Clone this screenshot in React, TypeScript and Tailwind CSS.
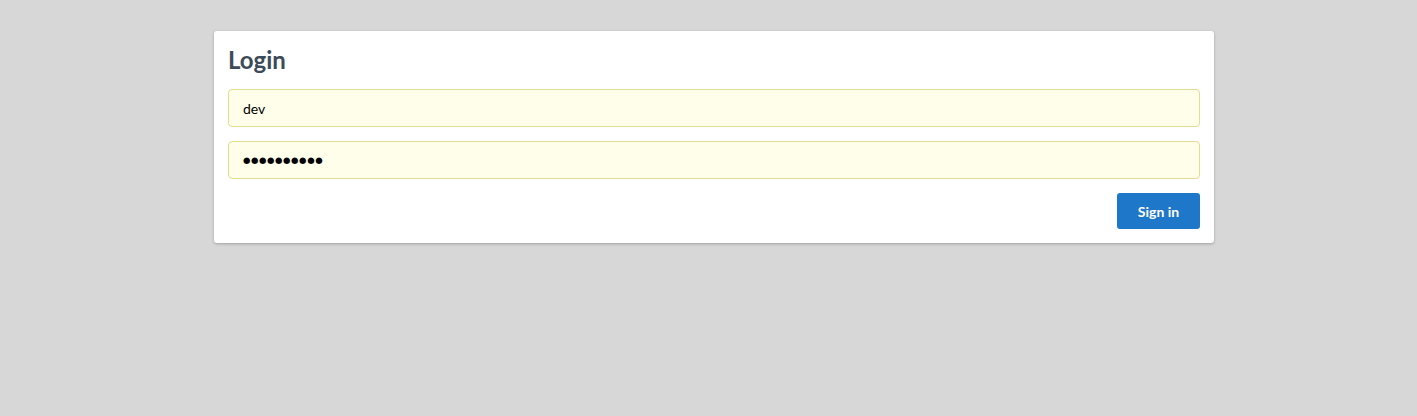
import React from "react";

export default function App() {
  return (
    <div className="min-h-[416px] w-full bg-[#d7d7d7] pt-[31px]" style={{ fontFamily: "Lato, 'Open Sans', sans-serif" }}>
      <div className="ml-[214px] w-[1000px] rounded-[3px] bg-white px-[14px] pt-[14px] pb-[14px] shadow-[0_1px_3px_rgba(0,0,0,0.25)]">
        <h1 className="m-0 text-[24px] font-bold leading-[30px] text-[#3d4b59]">Login</h1>
        <div className="mt-[14px] flex flex-col gap-[14px]">
          <div className="flex h-[38px] items-center rounded-[4px] border border-[#e3dc93] bg-[#fffeeb] px-[14px] text-[14px] text-black">
            dev
          </div>
          <div className="flex h-[38px] items-center rounded-[4px] border border-[#e3dc93] bg-[#fffeeb] px-[14px] text-black">
            <span style={{ fontFamily: "'DejaVu Sans', sans-serif" }} className="text-[8.5px] tracking-[0.6px]">●●●●●●●●●●</span>
          </div>
        </div>
        <div className="mt-[14px] flex justify-end">
          <button className="h-[36px] w-[83px] rounded-[3px] bg-[#1e77c9] text-[14px] font-bold text-white">Sign in</button>
        </div>
      </div>
    </div>
  );
}
